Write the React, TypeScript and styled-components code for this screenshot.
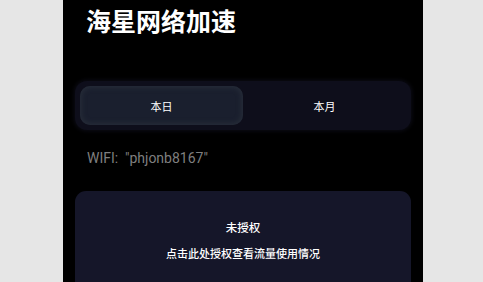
import React, { useState } from "react";
import styled, { createGlobalStyle } from "styled-components";

const Global = createGlobalStyle`
  html, body { margin: 0; padding: 0; background: #e6e6e6; }
  body { font-family: Roboto, "Noto Sans CJK SC", sans-serif; overflow: hidden; }
`;

const Screen = styled.div`
  width: 360px;
  height: 282px;
  margin-left: 63px;
  background: #000;
  box-sizing: border-box;
  padding: 0 12px;
  display: flex;
  flex-direction: column;
  overflow: hidden;
`;

const Title = styled.h1`
  margin: 0;
  padding: 4px 0 0 11px;
  font-family: "Noto Sans CJK SC", sans-serif;
  font-size: 25px;
  line-height: 32px;
  font-weight: 700;
  color: #fff;
`;

const Segment = styled.div`
  margin-top: 45px;
  height: 49px;
  box-sizing: border-box;
  padding: 5px;
  border-radius: 12px;
  background: #0e0e1b;
  box-shadow: 0 0 4px 1px #0c0c16;
  display: flex;
`;

const Tab = styled.button<{ $active: boolean }>`
  flex: 1;
  border: none;
  border-radius: 10px;
  font-family: "Noto Sans CJK SC", sans-serif;
  font-size: 11px;
  color: #fff;
  cursor: pointer;
  background: ${(p) => (p.$active ? "#1a1f2e" : "transparent")};
  box-shadow: ${(p) => (p.$active ? "inset 0 0 5px 2px #262c38" : "none")};
  padding: 0;
`;

const Wifi = styled.div`
  margin-top: 20px;
  padding-left: 12px;
  font-family: Roboto, sans-serif;
  font-size: 14px;
  line-height: 16px;
  color: #7f7f7f;
`;

const Card = styled.div`
  margin-top: 25px;
  flex: 1;
  border-radius: 11px 11px 0 0;
  background: #151629;
  display: flex;
  flex-direction: column;
  align-items: center;
  padding-top: 28px;
  gap: 11px;
`;

const CardTitle = styled.div`
  font-family: "Noto Sans CJK SC", sans-serif;
  font-size: 11.5px;
  line-height: 16px;
  font-weight: 500;
  color: #fff;
`;

const CardHint = styled.div`
  font-family: "Noto Sans CJK SC", sans-serif;
  font-size: 11px;
  line-height: 15px;
  font-weight: 500;
  color: #fff;
`;

export default function App() {
  const [tab, setTab] = useState(0);
  return (
    <>
      <Global />
      <Screen>
        <Title>海星网络加速</Title>
        <Segment>
          {["本日", "本月"].map((t, i) => (
            <Tab key={t} $active={tab === i} onClick={() => setTab(i)}>
              {t}
            </Tab>
          ))}
        </Segment>
        <Wifi>WIFI:&nbsp; "phjonb8167"</Wifi>
        <Card>
          <CardTitle>未授权</CardTitle>
          <CardHint>点击此处授权查看流量使用情况</CardHint>
        </Card>
      </Screen>
    </>
  );
}
